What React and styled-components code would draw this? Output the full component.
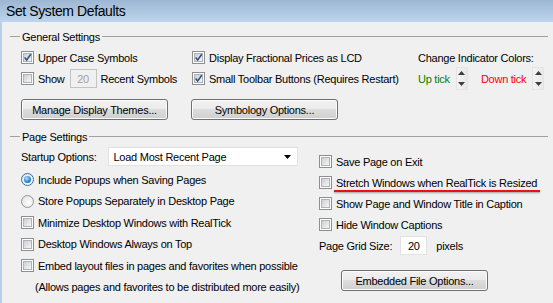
import React from "react"
import styled, { createGlobalStyle } from "styled-components"

const GlobalStyle = createGlobalStyle`
  html, body { margin: 0; padding: 0; background: #f0f0f0; }
  body {
    font-family: "Liberation Sans", Arial, sans-serif;
    font-size: 11px;
    letter-spacing: -0.25px;
    color: #000;
  }
`

const S = {
  Window: styled.div`
    width: 553px;
    height: 303px;
    overflow: hidden;
    background: #f0f0f0;
    display: flex;
    flex-direction: column;
  `,
  TitleBar: styled.div`
    flex: none;
    height: 22px;
    display: flex;
    align-items: center;
    padding-left: 6px;
    background: linear-gradient(#9db7d3, #bdd5ed);
    font-size: 14px;
    letter-spacing: -0.4px;
    color: #000;
  `,
  Body: styled.div`
    flex: 1;
    border-left: 2px solid #b7cfe9;
    padding: 0 5px 0 8px;
  `,
  GroupHeader: styled.div`
    display: flex;
    align-items: center;
    height: 13px;
    margin-top: ${p => p.$top}px;
    &::before {
      content: "";
      width: 10px;
      height: 1px;
      background: #a0a0a0;
    }
    &::after {
      content: "";
      flex: 1;
      height: 1px;
      background: #a0a0a0;
    }
  `,
  GroupLabel: styled.span`
    padding: 0 2px;
  `,
  GroupContent: styled.div`
    padding-left: 11px;
  `,
  GeneralGrid: styled.div`
    display: grid;
    grid-template-columns: 171px 226px 1fr;
    grid-auto-rows: 21px;
    margin-top: 4px;
  `,
  Item: styled.div`
    display: flex;
    align-items: center;
    gap: 4px;
    height: ${p => p.$h || 21}px;
    white-space: nowrap;
  `,
  Box: styled.span`
    flex: none;
    width: 13px;
    height: 13px;
    box-sizing: border-box;
    border: 1px solid #8e8f8f;
    background: #fff;
    display: flex;
    align-items: center;
    justify-content: center;
  `,
  BoxInner: styled.span`
    width: 9px;
    height: 9px;
    box-sizing: border-box;
    border: 1px solid #aeb3b9;
    background: linear-gradient(135deg, #cbcfd5, #f6f6f6);
    display: flex;
    align-items: center;
    justify-content: center;
  `,
  Radio: styled.span`
    flex: none;
    width: 13px;
    height: 13px;
    box-sizing: border-box;
    border-radius: 50%;
    border: 1px solid ${p => (p.$on ? "#3c6f98" : "#959595")};
    background: radial-gradient(circle at 60% 60%, #fff, #dcdcdc);
    display: flex;
    align-items: center;
    justify-content: center;
  `,
  Dot: styled.span`
    width: 7px;
    height: 7px;
    border-radius: 50%;
    background: radial-gradient(circle at 40% 35%, #b9e2fb, #2a8ad4 55%, #0d4e8c);
  `,
  Field: styled.span`
    display: inline-flex;
    align-items: center;
    justify-content: center;
    box-sizing: border-box;
    width: ${p => p.$w}px;
    height: 19px;
    border: 1px solid ${p => (p.$disabled ? "#c3c3c3" : "#e2e2e2")};
    background: ${p => (p.$disabled ? "#f0f0f0" : "#fff")};
    color: ${p => (p.$disabled ? "#a0a0a0" : "#000")};
    margin: 0 ${p => p.$mr || 0}px 0 ${p => p.$ml || 0}px;
  `,
  Tick: styled.span`
    color: ${p => p.$color};
  `,
  Spinner: styled.span`
    flex: none;
    width: 12px;
    height: 23px;
    box-sizing: border-box;
    border: 1px solid #e4e4e4;
    background: linear-gradient(90deg, #f4f4f4, #e8e8e8);
    display: flex;
    flex-direction: column;
    align-items: center;
    justify-content: space-around;
    margin: 0 ${p => p.$mr || 0}px 0 2px;
  `,
  ButtonRow: styled.div`
    display: flex;
    gap: 23px;
    margin-top: 10px;
  `,
  Button: styled.div`
    width: ${p => p.$w || 147}px;
    height: 21px;
    box-sizing: border-box;
    border: 1px solid #707070;
    border-radius: 3px;
    background: linear-gradient(#f2f2f2 0%, #ebebeb 45%, #dddddd 50%, #cfcfcf 100%);
    box-shadow: inset 0 0 0 1px #fcfcfc;
    display: flex;
    align-items: center;
    justify-content: center;
    margin-left: ${p => p.$ml || 0}px;
    margin-top: ${p => p.$mt || 0}px;
  `,
  Columns: styled.div`
    display: flex;
    margin-top: 4px;
  `,
  LeftCol: styled.div`
    width: 298px;
    flex: none;
  `,
  RightCol: styled.div`
    flex: 1;
    padding-top: 4px;
  `,
  StartupRow: styled.div`
    display: flex;
    align-items: center;
    height: 19px;
    margin-bottom: 3px;
  `,
  Select: styled.div`
    margin-left: 11px;
    width: 190px;
    height: 19px;
    box-sizing: border-box;
    border: 1px solid #e2e2e2;
    background: #fff;
    display: flex;
    align-items: center;
    justify-content: space-between;
    padding: 0 6px 0 5px;
  `,
  Note: styled.div`
    padding-left: 14px;
    height: 21px;
    line-height: 21px;
  `,
  Marked: styled.span`
    position: relative;
    &::after {
      content: "";
      position: absolute;
      left: -2px;
      right: -3px;
      bottom: -3px;
      height: 2px;
      background: #e8101a;
      box-shadow: 0 1px 2px rgba(0, 0, 0, 0.35);
    }
  `
}

const Check = ({ on }) => (
  <S.Box>
    <S.BoxInner>
      {on && (
        <svg width="11" height="11" viewBox="0 0 11 11" style={{ margin: -1 }}>
          <path d="M2 5.5 L4.5 8.5 L9.5 1.5" fill="none" stroke="#2b4d84" strokeWidth="1.8" />
        </svg>
      )}
    </S.BoxInner>
  </S.Box>
)

const CheckItem = ({ on, children, h }) => (
  <S.Item $h={h}>
    <Check on={on} />
    {children}
  </S.Item>
)

const RadioItem = ({ on, children }) => (
  <S.Item $h={21.5}>
    <S.Radio $on={on}>{on && <S.Dot />}</S.Radio>
    {children}
  </S.Item>
)

const Spin = ({ mr }) => (
  <S.Spinner $mr={mr}>
    <svg width="7" height="4" viewBox="0 0 7 4">
      <path d="M0 4 L3.5 0 L7 4 Z" fill="#3c3c3c" />
    </svg>
    <svg width="7" height="4" viewBox="0 0 7 4">
      <path d="M0 0 L3.5 4 L7 0 Z" fill="#3c3c3c" />
    </svg>
  </S.Spinner>
)

const App = () => (
  <S.Window>
    <GlobalStyle />
    <S.TitleBar>Set System Defaults</S.TitleBar>
    <S.Body>
      <S.GroupHeader $top={8}>
        <S.GroupLabel>General Settings</S.GroupLabel>
      </S.GroupHeader>
      <S.GroupContent>
        <S.GeneralGrid>
          <CheckItem on>Upper Case Symbols</CheckItem>
          <CheckItem on>Display Fractional Prices as LCD</CheckItem>
          <S.Item>Change Indicator Colors:</S.Item>
          <S.Item>
            <Check />
            Show
            <S.Field $w={27} $ml={1} $disabled>20</S.Field>
            Recent Symbols
          </S.Item>
          <CheckItem on>Small Toolbar Buttons (Requires Restart)</CheckItem>
          <S.Item>
            <S.Tick $color="#008000">Up tick</S.Tick>
            <Spin mr={9} />
            <S.Tick $color="#ff0000">Down tick</S.Tick>
            <Spin />
          </S.Item>
        </S.GeneralGrid>
        <S.ButtonRow>
          <S.Button>Manage Display Themes...</S.Button>
          <S.Button>Symbology Options...</S.Button>
        </S.ButtonRow>
      </S.GroupContent>

      <S.GroupHeader $top={10}>
        <S.GroupLabel>Page Settings</S.GroupLabel>
      </S.GroupHeader>
      <S.GroupContent>
        <S.Columns>
          <S.LeftCol>
            <S.StartupRow>
              Startup Options:
              <S.Select>
                Load Most Recent Page
                <svg width="7" height="4" viewBox="0 0 7 4">
                  <path d="M0 0 L3.5 4 L7 0 Z" fill="#000" />
                </svg>
              </S.Select>
            </S.StartupRow>
            <RadioItem on>Include Popups when Saving Pages</RadioItem>
            <RadioItem>Store Popups Separately in Desktop Page</RadioItem>
            <CheckItem h={21.5}>Minimize Desktop Windows with RealTick</CheckItem>
            <CheckItem h={21.5}>Desktop Windows Always on Top</CheckItem>
            <CheckItem h={21.5}>Embed layout files in pages and favorites when possible</CheckItem>
            <S.Note>(Allows pages and favorites to be distributed more easily)</S.Note>
          </S.LeftCol>
          <S.RightCol>
            <CheckItem>Save Page on Exit</CheckItem>
            <CheckItem>
              <S.Marked>Stretch Windows when RealTick is Resized</S.Marked>
            </CheckItem>
            <CheckItem>Show Page and Window Title in Caption</CheckItem>
            <CheckItem>Hide Window Captions</CheckItem>
            <S.Item>
              Page Grid Size:
              <S.Field $w={27} $ml={4} $mr={5}>20</S.Field>
              pixels
            </S.Item>
            <S.Button $ml={22} $mt={14}>Embedded File Options...</S.Button>
          </S.RightCol>
        </S.Columns>
      </S.GroupContent>
    </S.Body>
  </S.Window>
)

export default App
